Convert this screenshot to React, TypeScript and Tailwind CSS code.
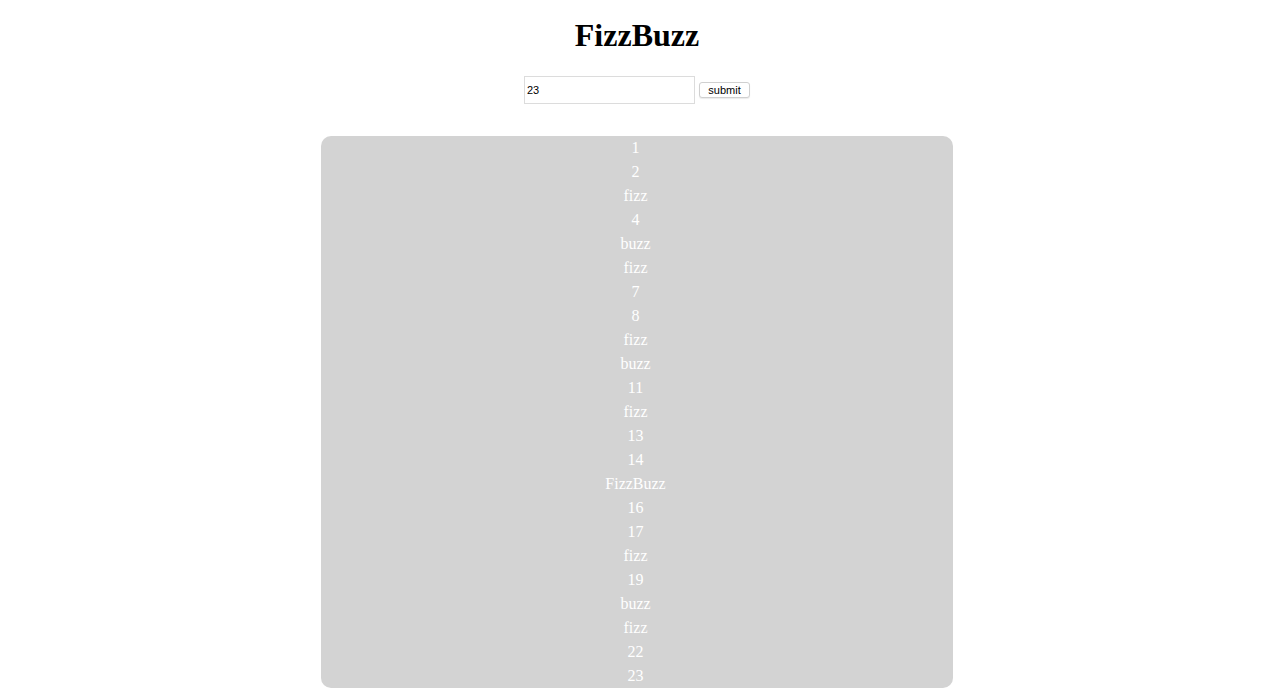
import { useState } from "react";

const fizz = (n: number) => {
  const out: string[] = [];
  for (let i = 1; i <= n; i++) {
    if (i % 15 === 0) out.push("FizzBuzz");
    else if (i % 3 === 0) out.push("fizz");
    else if (i % 5 === 0) out.push("buzz");
    else out.push(String(i));
  }
  return out;
};

export default function App() {
  const [value, setValue] = useState("23");
  const [count, setCount] = useState(23);

  return (
    <div className="flex flex-col items-center font-['Liberation_Serif',serif] text-black bg-white min-h-screen">
      <h1 className="mt-[17px] mb-[22px] text-[32px] leading-[37px] font-bold">FizzBuzz</h1>
      <form
        className="flex items-center gap-[4px]"
        onSubmit={(e) => {
          e.preventDefault();
          setCount(parseInt(value) || 0);
        }}
      >
        <input
          value={value}
          onChange={(e) => setValue(e.target.value)}
          className="w-[171px] h-[28px] border border-[#dcdcdc] px-[2px] text-[11px] font-['Liberation_Sans',sans-serif] outline-none"
        />
        <button
          type="submit"
          className="h-[16px] w-[51px] rounded-[3px] border border-[#d0d0d0] bg-white text-[11px] leading-none font-['Liberation_Sans',sans-serif] shadow-[0_1px_1px_rgba(0,0,0,0.08)]"
        >
          submit
        </button>
      </form>
      <ul className="mt-[32px] w-[632px] rounded-[10px] bg-[#d3d3d3] pr-[3px] text-white text-[16px] leading-[24px] text-center">
        {fizz(count).map((s, i) => (
          <li key={i}>{s}</li>
        ))}
      </ul>
    </div>
  );
}
